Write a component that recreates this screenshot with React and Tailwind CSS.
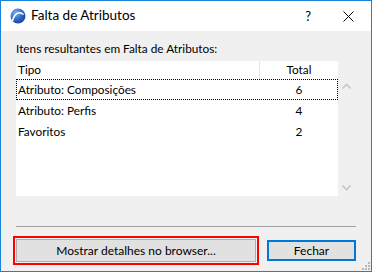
import React from "react";

const rows = [
  { tipo: "Atributo: Composições", total: 6, focused: true },
  { tipo: "Atributo: Perfis", total: 4 },
  { tipo: "Favoritos", total: 2 },
];

const AppIcon = () => (
  <svg width="16" height="16" viewBox="0 0 16 16">
    <defs>
      <radialGradient id="g" cx="0.35" cy="0.3" r="0.8">
        <stop offset="0" stopColor="#7fb2f0" />
        <stop offset="0.6" stopColor="#2a62c4" />
        <stop offset="1" stopColor="#1b3f8f" />
      </radialGradient>
    </defs>
    <circle cx="8" cy="8" r="7.5" fill="url(#g)" />
    <path d="M2.5 13 C4 6 9 2.5 13.5 6.5" stroke="#fff" strokeWidth="1.6" fill="none" />
  </svg>
);

export default function App() {
  return (
    <div className="w-[372px] h-[272px] border border-[#1883d7] bg-[#f0f0f0] flex flex-col font-['Lato',sans-serif] text-[11.8px] text-black overflow-hidden">
      {/* title bar */}
      <div className="h-[30px] bg-white flex items-center shrink-0">
        <div className="ml-[9px] mr-[5px] flex">
          <AppIcon />
        </div>
        <span className="text-[13.5px] leading-none">Falta de Atributos</span>
        <span className="ml-auto mr-[32px] text-[13px] leading-none">?</span>
        <svg width="11" height="11" viewBox="0 0 11 11" className="mr-[17px]">
          <path d="M0.5 0.5 L10.5 10.5 M10.5 0.5 L0.5 10.5" stroke="#000" strokeWidth="1" />
        </svg>
      </div>

      <div className="flex-1 flex flex-col px-[15px] relative">
        <div className="mt-[11px] h-[14px] leading-[14px]">Itens resultantes em Falta de Atributos:</div>

        {/* list */}
        <div className="mt-[5px] flex h-[135px]">
          <div className="w-[322px] bg-white">
            <div className="flex h-[18px] items-center">
              <div className="w-[243px] pl-[2px]">Tipo</div>
              <div className="w-px h-full bg-[#e5e5e5]" />
              <div className="flex-1 text-center">Total</div>
            </div>
            {rows.map((r) => (
              <div
                key={r.tipo}
                className={`flex h-[21px] items-center ${r.focused ? "border border-dotted border-black" : "border border-transparent"}`}
              >
                <div className="w-[242px] pl-[1px]">{r.tipo}</div>
                <div className="flex-1 text-center pl-[2px]">{r.total}</div>
              </div>
            ))}
          </div>
          <div className="w-[17px] flex flex-col items-center justify-between pt-[22px] pb-[5px]">
            <svg width="9" height="6" viewBox="0 0 9 6">
              <path d="M0.5 5.5 L4.5 1.5 L8.5 5.5" stroke="#c8c8c8" strokeWidth="1.6" fill="none" />
            </svg>
            <svg width="9" height="6" viewBox="0 0 9 6">
              <path d="M0.5 0.5 L4.5 4.5 L8.5 0.5" stroke="#c8c8c8" strokeWidth="1.6" fill="none" />
            </svg>
          </div>
        </div>

        <div className="mt-[30px] h-px bg-[#a0a0a0]" />

        {/* buttons */}
        <div className="mt-[9px] flex items-center">
          <div className="ml-[-3px] w-[246px] h-[29px] border-2 border-[#ff0000] p-px">
            <button className="w-full h-full bg-[#e1e1e1] border border-[#adadad] text-[12px] leading-none">
              Mostrar detalhes no browser...
            </button>
          </div>
          <button className="ml-[8px] w-[89px] h-[21px] bg-[#e1e1e1] border-2 border-[#0078d7] text-[12px] leading-none">
            Fechar
          </button>
        </div>

        {/* resize grip */}
        <svg width="10" height="10" viewBox="0 0 10 10" className="absolute right-[1px] bottom-[1px]">
          {[[8, 2], [8, 5], [8, 8], [5, 5], [5, 8], [2, 8]].map(([x, y]) => (
            <rect key={`${x}-${y}`} x={x} y={y} width="2" height="2" fill="#b8b8b8" />
          ))}
        </svg>
      </div>
    </div>
  );
}
